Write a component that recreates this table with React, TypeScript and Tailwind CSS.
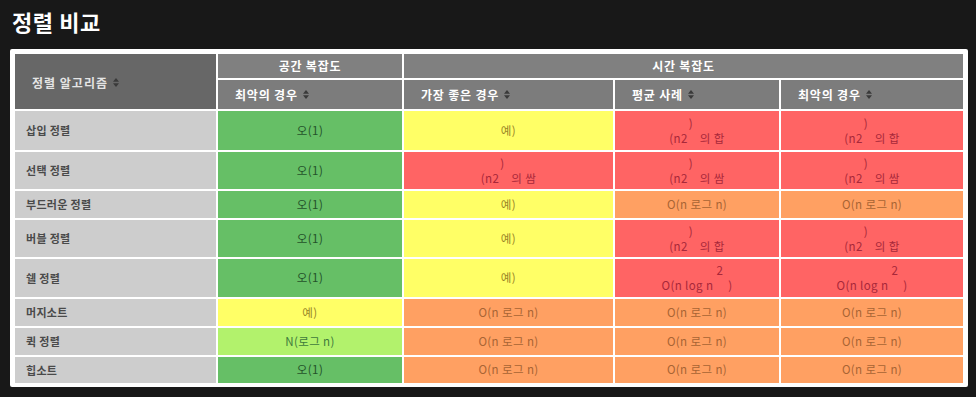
import React from "react";

const FONT = { fontFamily: '"Noto Sans CJK KR", "Noto Sans", sans-serif' };

function SortIcon() {
  return (
    <svg width="6" height="9" viewBox="0 0 6 9" className="inline-block ml-[5px] align-middle">
      <path d="M3 0 L6 3.8 L0 3.8 Z" fill="#3a3a3a" />
      <path d="M3 9 L6 5.2 L0 5.2 Z" fill="#3a3a3a" />
    </svg>
  );
}

type Kind = "g" | "y" | "r" | "o" | "l";

const kindCls: Record<Kind, string> = {
  g: "bg-[#66bf66] text-[#24522a]",
  y: "bg-[#ffff66] text-[#9a8626]",
  r: "bg-[#ff6464] text-[#a8283a]",
  o: "bg-[#ffa062] text-[#a86434]",
  l: "bg-[#b2f26c] text-[#3f7a3c]",
};

type Val =
  | { k: Kind; t: string }
  | { k: Kind; sum: string }
  | { k: Kind; sq: true };

function Cell({ v }: { v: Val }) {
  let content: React.ReactNode;
  if ("t" in v) content = <span className="whitespace-pre">{v.t}</span>;
  else if ("sum" in v)
    content = (
      <div className="flex flex-col items-center leading-[15px]">
        <span className="mr-[12px]">)</span>
        <span className="whitespace-pre">{`(n2    의 ${v.sum}`}</span>
      </div>
    );
  else
    content = (
      <div className="flex flex-col items-center leading-[15px]">
        <span className="ml-[46px]">2</span>
        <span className="whitespace-pre">{"O(n log n     )"}</span>
      </div>
    );
  return (
    <div
      className={`flex items-center justify-center text-[11.5px] tracking-[0.4px] ${kindCls[v.k]}`}
    >
      {content}
    </div>
  );
}

const LOG = "O(n 로그 n)";

const rows: { name: string; h: string; cells: Val[] }[] = [
  {
    name: "삽입 정렬",
    h: "h-[39px]",
    cells: [
      { k: "g", t: "오(1)" },
      { k: "y", t: "예)" },
      { k: "r", sum: "합" },
      { k: "r", sum: "합" },
    ],
  },
  {
    name: "선택 정렬",
    h: "h-[37px]",
    cells: [
      { k: "g", t: "오(1)" },
      { k: "r", sum: "쌈" },
      { k: "r", sum: "쌈" },
      { k: "r", sum: "쌈" },
    ],
  },
  {
    name: "부드러운 정렬",
    h: "h-[27px]",
    cells: [
      { k: "g", t: "오(1)" },
      { k: "y", t: "예)" },
      { k: "o", t: LOG },
      { k: "o", t: LOG },
    ],
  },
  {
    name: "버블 정렬",
    h: "h-[37px]",
    cells: [
      { k: "g", t: "오(1)" },
      { k: "y", t: "예)" },
      { k: "r", sum: "합" },
      { k: "r", sum: "합" },
    ],
  },
  {
    name: "쉘 정렬",
    h: "h-[38px]",
    cells: [
      { k: "g", t: "오(1)" },
      { k: "y", t: "예)" },
      { k: "r", sq: true },
      { k: "r", sq: true },
    ],
  },
  {
    name: "머지소트",
    h: "h-[27px]",
    cells: [
      { k: "y", t: "예)" },
      { k: "o", t: LOG },
      { k: "o", t: LOG },
      { k: "o", t: LOG },
    ],
  },
  {
    name: "퀵 정렬",
    h: "h-[27px]",
    cells: [
      { k: "l", t: "N(로그 n)" },
      { k: "o", t: LOG },
      { k: "o", t: LOG },
      { k: "o", t: LOG },
    ],
  },
  {
    name: "힙소트",
    h: "h-[26px]",
    cells: [
      { k: "g", t: "오(1)" },
      { k: "o", t: LOG },
      { k: "o", t: LOG },
      { k: "o", t: LOG },
    ],
  },
];

const headCell =
  "bg-[#7c7c7c] flex items-center pl-[17px] text-[12px] tracking-[0.8px] font-bold text-white";

export default function App() {
  return (
    <div className="w-[976px] h-[397px] bg-[#181818] overflow-hidden" style={FONT}>
      <div className="pl-[12px] pt-[6px] h-[49px]">
        <h1 className="text-[22px] font-bold text-white leading-[30px] tracking-[0.6px]">정렬 비교</h1>
      </div>
      <div className="ml-[10px] w-[958px] h-[338px] bg-white rounded-[2px] p-[5px]">
        <div className="grid grid-cols-[201px_184px_209px_164px_182px] grid-rows-[24px_29px] gap-[2px] bg-white">
          <div className="row-span-2 bg-[#676767] flex items-center pl-[17px] pt-[2px] text-[12px] tracking-[1px] font-bold text-[#e4e4e4]">
            정렬 알고리즘
            <SortIcon />
          </div>
          <div className="bg-[#808080] flex items-center justify-center text-[12px] tracking-[0.8px] font-bold text-white">
            공간 복잡도
          </div>
          <div className="col-span-3 bg-[#808080] flex items-center justify-center text-[12px] tracking-[0.8px] font-bold text-white">
            시간 복잡도
          </div>
          <div className={headCell}>
            최악의 경우
            <SortIcon />
          </div>
          <div className={headCell}>
            가장 좋은 경우
            <SortIcon />
          </div>
          <div className={headCell}>
            평균 사례
            <SortIcon />
          </div>
          <div className={headCell}>
            최악의 경우
            <SortIcon />
          </div>
        </div>
        <div className="mt-[2px] flex flex-col gap-[2px]">
          {rows.map((r) => (
            <div
              key={r.name}
              className={`grid grid-cols-[201px_184px_209px_164px_182px] gap-[2px] ${r.h}`}
            >
              <div className="bg-[#cdcdcd] flex items-center pl-[11px] text-[11px] tracking-[0.3px] font-bold text-[#4a4a4a]">
                {r.name}
              </div>
              {r.cells.map((c, i) => (
                <Cell key={i} v={c} />
              ))}
            </div>
          ))}
        </div>
      </div>
    </div>
  );
}
